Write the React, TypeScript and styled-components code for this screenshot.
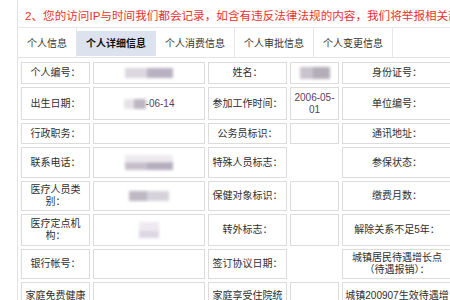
import * as React from 'react';
import styled, { createGlobalStyle } from 'styled-components';

const GlobalStyle = createGlobalStyle`
  html, body {
    margin: 0;
    padding: 0;
    background: #fff;
    overflow: hidden;
  }
  body {
    font-family: "Liberation Sans", "Noto Sans CJK SC", sans-serif;
    color: #333;
  }
`;

const Panel = styled.div`
  margin-left: 17px;
  border-left: 1px solid #e2e2e2;
  height: 300px;
  overflow: hidden;
`;

const Notice = styled.div`
  height: 28px;
  box-sizing: border-box;
  padding: 6px 0 0 7px;
  border-bottom: 1px solid #e6e6e6;
  color: #e8322f;
  font-size: 11.6px;
  line-height: 20px;
  white-space: nowrap;
  overflow: hidden;
`;

const TabBar = styled.div`
  display: flex;
  height: 29px;
  border-bottom: 1px solid #e3e3e3;
`;

const Tab = styled.div<{ $active?: boolean }>`
  display: flex;
  align-items: center;
  padding: 0 9px;
  font-size: 10px;
  color: ${p => (p.$active ? '#111' : '#333')};
  font-weight: ${p => (p.$active ? 700 : 400)};
  border-right: 1px solid ${p => (p.$active ? 'transparent' : '#e6e6e6')};
  background: ${p => (p.$active ? 'linear-gradient(#fff 0 3px, #dde3ee 3px 28px, #fff 28px)' : '#fff')};
  white-space: nowrap;
`;

const Table = styled.div`
  display: grid;
  grid-template-columns: 69px 112px 79px 49px 110px 110px;
  grid-template-rows: 22px 33px 21px 31px 30px 32px 30px 40px;
  gap: 3px;
  margin: 4px 0 0 3px;
  width: max-content;
`;

const Cell = styled.div<{ $bare?: boolean }>`
  display: flex;
  align-items: center;
  justify-content: center;
  text-align: center;
  box-sizing: border-box;
  padding: 0 2px;
  border: 1px solid ${p => (p.$bare ? 'transparent' : '#dcdcdc')};
  font-size: 10px;
  line-height: 12px;
  color: #2e2e2e;
`;

const Value = styled.span`
  color: #553f66;
  display: inline-flex;
  align-items: center;
`;

const Blur = styled.span<{ $w: number; $h: number; $c: string; $c2?: string }>`
  display: inline-block;
  width: ${p => p.$w}px;
  height: ${p => p.$h}px;
  background: ${p =>
    p.$c2 ? `linear-gradient(90deg, ${p.$c} 0 45%, ${p.$c2} 45% 100%)` : p.$c};
  filter: blur(1.5px);
`;

const BlurStack = styled.span`
  display: inline-flex;
  flex-direction: column;
`;

type Row = [React.ReactNode, React.ReactNode, React.ReactNode, React.ReactNode | null, React.ReactNode, React.ReactNode];

const rows: Row[] = [
  ['个人编号：', <Blur $w={48} $h={10} $c="#dcd6df" $c2="#b9b1c1" />, '姓名：', <Blur $w={30} $h={12} $c="#c8c3cc" $c2="#b3adb8" />, '身份证号：', ''],
  ['出生日期：', <Value><Blur $w={22} $h={10} $c="#e6e3e8" $c2="#bdb6c3" />-06-14</Value>, '参加工作时间：', <Value>2006-05-<br />01</Value>, '单位编号：', ''],
  ['行政职务：', '', '公务员标识：', '', '通讯地址：', ''],
  ['联系电话：', <BlurStack><Blur $w={48} $h={7} $c="#eeebef" /><Blur $w={48} $h={8} $c="#c6bfcb" $c2="#b5adbd" /></BlurStack>, '特殊人员标志：', null, '参保状态：', ''],
  ['医疗人员类别：', <Blur $w={40} $h={10} $c="#bdb8c1" $c2="#d6d2d9" />, '保健对象标识：', '', '缴费月数：', ''],
  ['医疗定点机构：', <BlurStack><Blur $w={20} $h={8} $c="#eee9f0" /><Blur $w={20} $h={8} $c="#ddd6e3" /></BlurStack>, '转外标志：', '', '解除关系不足5年：', ''],
  ['银行帐号：', '', '签订协议日期：', null, '城镇居民待遇增长点（待遇报销）：', ''],
  ['家庭免费健康体检：', '', '家庭享受住院统筹：', '', '城镇200907生效待遇增长点：', ''],
];

const tabs = ['个人信息', '个人详细信息', '个人消费信息', '个人审批信息', '个人变更信息'];

export default function App() {
  return (
    <>
      <GlobalStyle />
      <Panel>
        <Notice>2、您的访问IP与时间我们都会记录，如含有违反法律法规的内容，我们将举报相关部门处理。</Notice>
        <TabBar>
          {tabs.map((t, i) => (
            <Tab key={t} $active={i === 1}>{t}</Tab>
          ))}
        </TabBar>
        <Table>
          {rows.map((r, ri) =>
            r.map((c, ci) => (
              <Cell key={`${ri}-${ci}`} $bare={c === null}>
                {c}
              </Cell>
            ))
          )}
        </Table>
      </Panel>
    </>
  );
}
